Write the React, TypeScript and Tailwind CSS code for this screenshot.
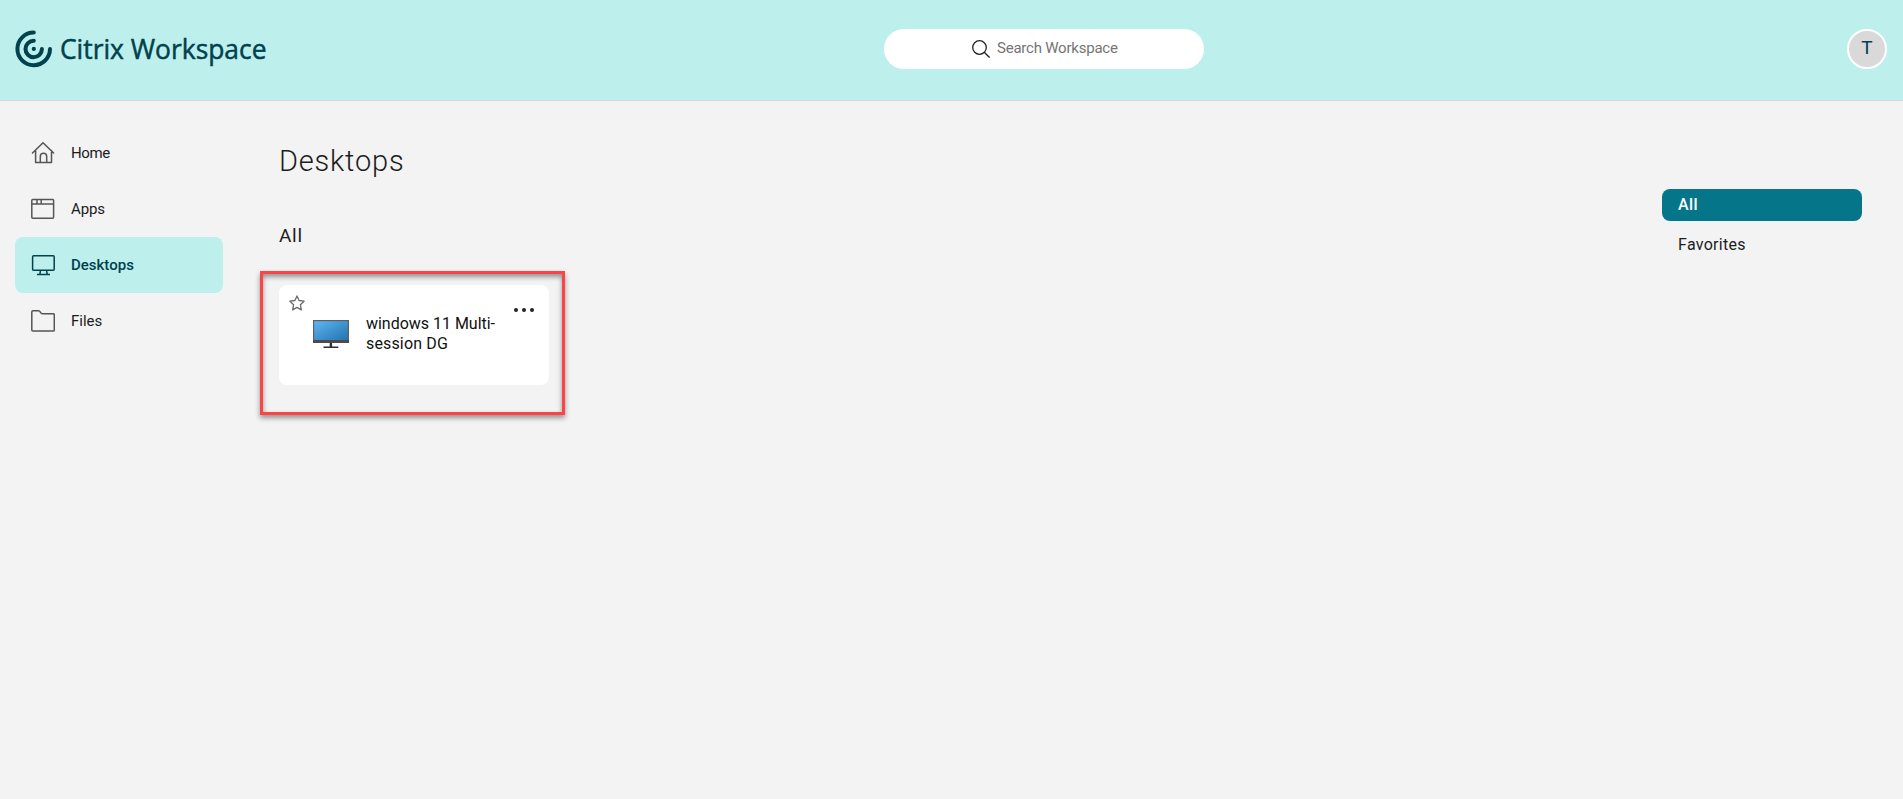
import type { ReactNode } from "react";

type NavItem = {
  label: string;
  icon: ReactNode;
  spacing: string;
};

const CitrixLogo = () => (
  <svg
    className="h-[38px] w-[38px] shrink-0"
    viewBox="0 0 38 38"
    fill="none"
    stroke="#02414d"
    strokeWidth="4"
    strokeLinecap="round"
    aria-hidden="true"
  >
    <path d="M18.8 2.6A16.3 16.3 0 1 0 35 19" />
    <path d="M18.8 10.8A8.2 8.2 0 1 0 26.9 19" />
    <circle cx="18.8" cy="18.9" r="2.1" fill="#02414d" stroke="none" />
  </svg>
);

const HomeIcon = () => (
  <svg className="h-6 w-6" viewBox="0 0 24 24" fill="none" stroke="currentColor" strokeWidth="1.5" strokeLinejoin="round" strokeLinecap="round">
    <path d="M1.5 12 12 1.8 22.6 12M4.6 9.6v11.9h15.9V9.6M9.3 21.2v-5.7c0-4.2 6.4-4.2 6.4 0v5.7" />
  </svg>
);

const AppsIcon = () => (
  <svg className="h-6 w-6" viewBox="0 0 24 24" fill="none" stroke="currentColor" strokeWidth="1.5">
    <rect x=".8" y="2.6" width="21.8" height="18.6" rx="1" />
    <path d="M.8 7h21.8M6 2.6V7M10.2 2.6V7" />
  </svg>
);

const DesktopIcon = () => (
  <svg className="h-6 w-6" viewBox="0 0 24 24" fill="none" stroke="currentColor" strokeWidth="1.5">
    <rect x="1.6" y="2.7" width="21.6" height="14.6" rx="1" />
    <path d="M9.5 17.3 8.9 21.2M15.5 17.3l.7 3.9M6 21.5h13" />
  </svg>
);

const FolderIcon = () => (
  <svg className="h-6 w-6" viewBox="0 0 24 24" fill="none" stroke="currentColor" strokeWidth="1.5" strokeLinejoin="round">
    <path d="M.8 20.9V3c0-.8.4-1.3 1.2-1.3h5.7c1.5 0 1.8 3 3.6 3h11c.6 0 1 .5 1 1v15.2c0 .6-.4 1-1 1H1.8c-.6 0-1-.4-1-1Z" />
  </svg>
);

const SearchIcon = () => (
  <svg className="h-[18px] w-[18px]" viewBox="0 0 18 18" fill="none" stroke="#222" strokeWidth="1.3">
    <circle cx="7.5" cy="7.5" r="6.8" />
    <path d="m12.3 12.3 5.3 5.3" />
  </svg>
);

const StarIcon = () => (
  <svg className="h-4 w-4" viewBox="0 0 16 16" fill="none" stroke="#6b6b6b" strokeWidth="1.3" strokeLinejoin="round">
    <path d="m8 .9 2.1 4.6 5 .7-3.7 3.5.9 5.2L8 12.4l-4.3 2.5.9-5.2L.9 6.2l5-.7Z" />
  </svg>
);

const MonitorIcon = () => (
  <svg className="h-[29px] w-9" viewBox="0 0 36 29" aria-hidden="true">
    <defs>
      <linearGradient id="screen" x1="0" y1="0" x2="1" y2="1">
        <stop offset="0" stopColor="#5db5f2" />
        <stop offset="1" stopColor="#2474b0" />
      </linearGradient>
    </defs>
    <path fill="#2f2f2f" d="M16.7 23h2.4v3.5h6.2V28H10.5v-1.5h6.2Z" />
    <rect x="0" y="0" width="36" height="23" fill="#5f5f61" />
    <rect x="0" y="20" width="36" height="3" fill="#4b4b4d" />
    <rect x="1.2" y="1.2" width="33.6" height="18.8" fill="url(#screen)" />
  </svg>
);

const navItems: NavItem[] = [
  { label: "Home", icon: <HomeIcon />, spacing: "tracking-[-0.35px]" },
  { label: "Apps", icon: <AppsIcon />, spacing: "tracking-[-0.1px]" },
  { label: "Desktops", icon: <DesktopIcon />, spacing: "tracking-[0px]" },
  { label: "Files", icon: <FolderIcon />, spacing: "tracking-[0px]" },
];

const Header = () => (
  <header className="flex h-[101px] items-start border-b border-[#d6d6d6] bg-[#bdf0ec] pr-4 pl-[15px]">
    <div className="flex w-[869px] items-center pt-[30px]">
      <CitrixLogo />
      <span className="ml-[7px] inline-block origin-left scale-x-[0.942] pb-[2px] font-['Open_Sans',sans-serif] text-[28px] leading-9 font-medium whitespace-nowrap text-[#02414d] [-webkit-text-stroke:0.5px_#02414d]">
        Citrix Workspace
      </span>
    </div>
    <div className="mt-[29px] flex h-10 w-80 items-center rounded-full bg-white pl-[88px]">
      <SearchIcon />
      <span className="ml-[7px] pb-[2px] text-[15px] tracking-[-0.22px] text-[#757575]">
        Search Workspace
      </span>
    </div>
    <button className="mt-[29px] ml-auto flex h-10 w-10 items-center justify-center rounded-full border-2 border-white bg-[#d9d9d9] pb-[2px] text-[19px] text-[#02414d]">
      T
    </button>
  </header>
);

const Sidebar = ({ active }: { active: string }) => (
  <nav className="w-[238px] shrink-0 pt-6 pl-[15px]">
    {navItems.map((item) => (
      <a
        key={item.label}
        className={`flex h-14 w-52 items-center rounded-lg pl-4 text-[15px] ${item.spacing} ${
          item.label === active
            ? "bg-[#bdf0ec] font-medium text-[#02414d]"
            : "text-[#1c1c1c]"
        }`}
      >
        <span className={item.label === active ? "" : "text-[#555]"}>
          {item.icon}
        </span>
        <span className="ml-4">{item.label}</span>
      </a>
    ))}
  </nav>
);

const DesktopCard = () => (
  <div className="relative h-[100px] w-[270px] rounded-lg bg-white">
    <div className="absolute top-[10px] left-[10px]">
      <StarIcon />
    </div>
    <div className="flex pt-[29px] pl-[34px]">
      <div className="pt-[6px]">
        <MonitorIcon />
      </div>
      <p className="ml-[17px] w-[150px] text-base leading-5 text-[#111]">
        <span className="tracking-[-0.02px]">windows 11 Multi-</span>
        <br />
        <span className="tracking-[0.15px]">session DG</span>
      </p>
    </div>
    <div className="absolute top-[23px] right-[15px] flex gap-1">
      <span className="h-1 w-1 rounded-full bg-[#222]" />
      <span className="h-1 w-1 rounded-full bg-[#222]" />
      <span className="h-1 w-1 rounded-full bg-[#222]" />
    </div>
  </div>
);

const App = () => {
  return (
    <div className="min-h-screen bg-[#f3f3f3] font-['Roboto',sans-serif] text-[#1c1c1c]">
      <Header />
      <div className="flex">
        <Sidebar active="Desktops" />
        <main className="flex-1 pt-10 pl-[22px]">
          <h1 className="pl-[19px] text-[29px] leading-10 font-light tracking-[0.8px]">
            Desktops
          </h1>
          <h2 className="mt-[43px] pl-[19px] text-[19px] leading-6 tracking-[0.7px]">
            All
          </h2>
          <div className="mt-[23px] h-[144px] w-[305px] border-[3px] border-[#fc4444] pt-[11px] pl-4 shadow-[0_3px_5px_rgba(0,0,0,0.4),inset_0_3px_5px_rgba(0,0,0,0.4)]">
            <DesktopCard />
          </div>
        </main>
        <aside className="w-[241px] pt-[88px] text-base leading-8">
          <div className="h-8 w-[200px] rounded-lg bg-[#05768a] pl-4 font-medium tracking-[0.4px] text-white">
            All
          </div>
          <div className="mt-2 h-8 pl-4 tracking-[0.3px]">Favorites</div>
        </aside>
      </div>
    </div>
  );
};

export default App;
